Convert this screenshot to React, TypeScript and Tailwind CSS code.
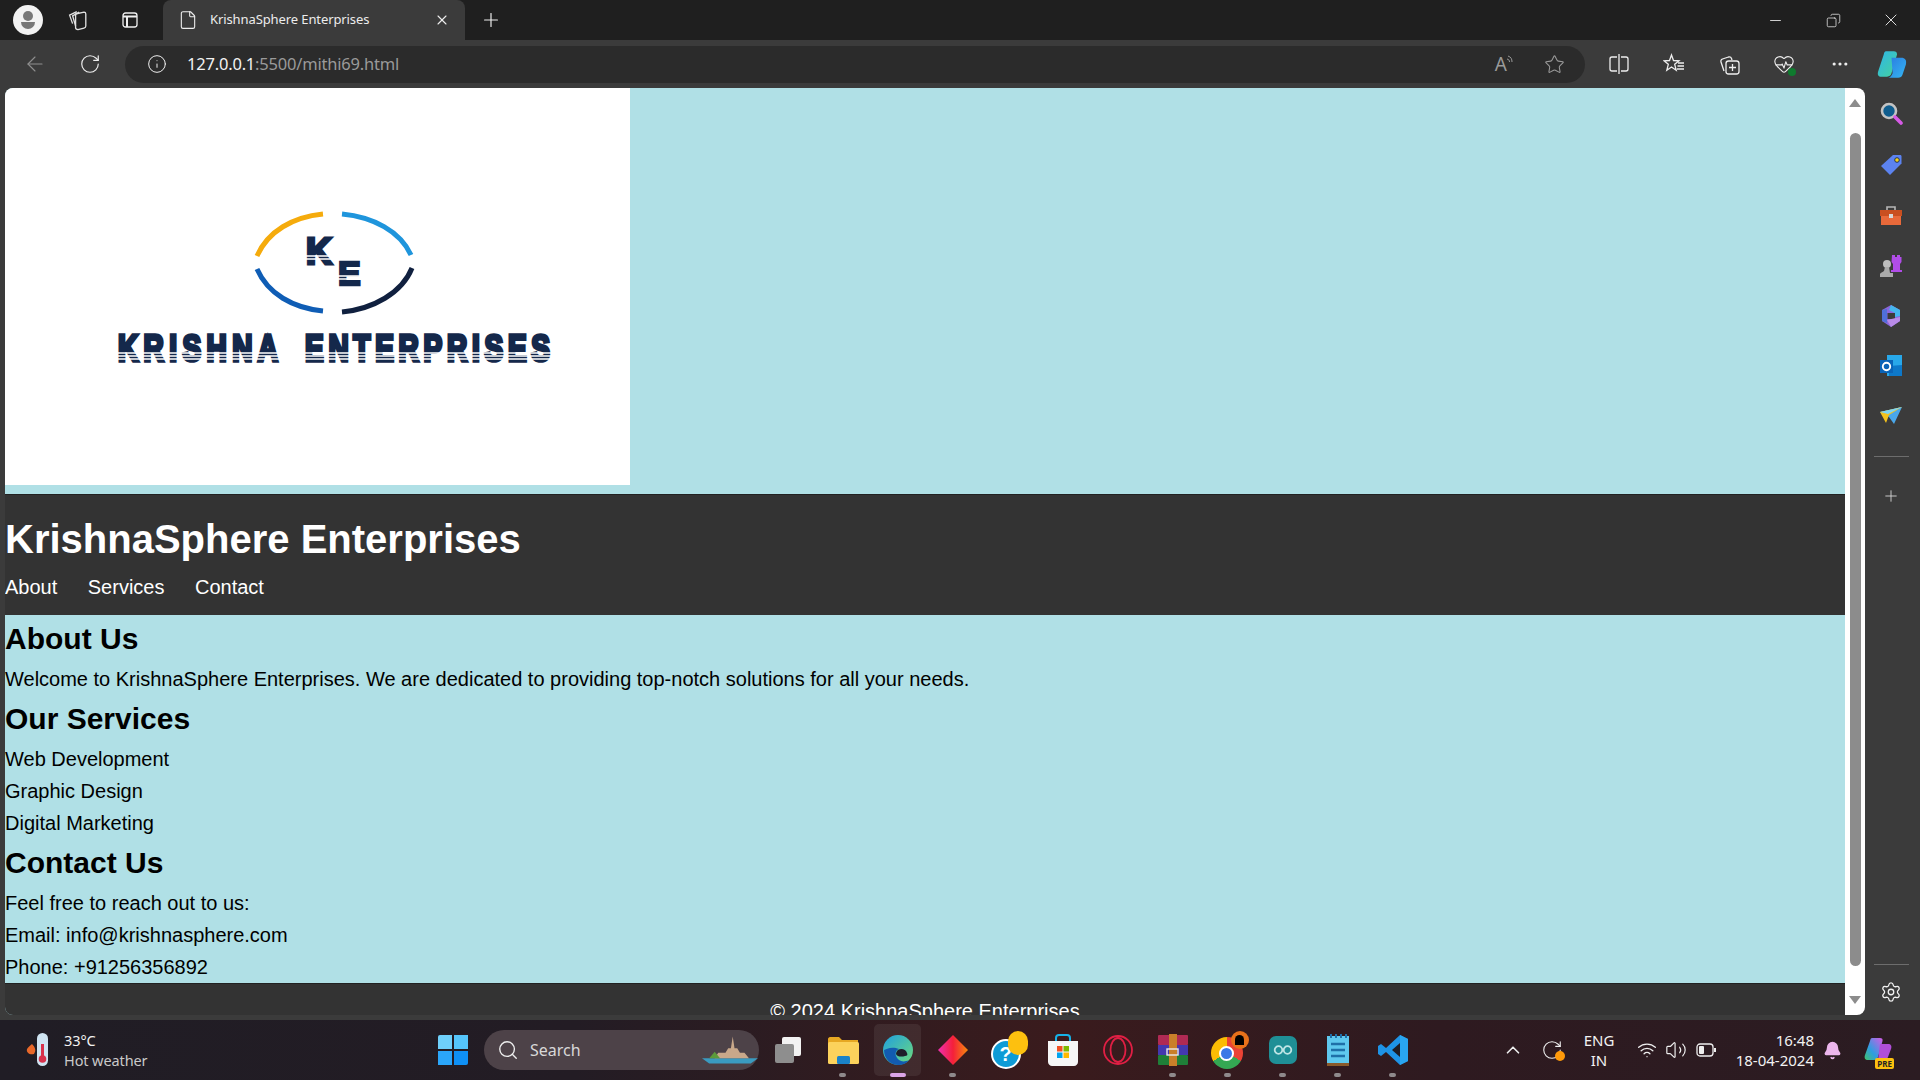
import { ArrowLeft, RotateCw, Info, Star, Plus, X, Minus, Ellipsis, Settings, Search, ChevronUp, Wifi, Volume2, File, Bell, Copy, HeartPulse } from 'lucide-react';
import type { ReactNode } from 'react';

const ui = "font-['Noto_Sans',sans-serif]";

function Copilot({ size = 28 }: { size?: number }) {
  return (
    <svg width={size} height={size} viewBox="0 0 28 28">
      <defs>
        <linearGradient id="cpA" x1="0" y1="0" x2="1" y2="1">
          <stop offset="0" stopColor="#2fb5ea" />
          <stop offset="1" stopColor="#45d39a" />
        </linearGradient>
        <linearGradient id="cpB" x1="0" y1="0" x2="1" y2="1">
          <stop offset="0" stopColor="#2a7be0" />
          <stop offset="1" stopColor="#35b6f2" />
        </linearGradient>
      </defs>
      <path d="M9 2h7c2 0 3 1 3 3l-5 17c-.5 2-2 3-4 3H5C2 25 1 23 2 20L7 5c.4-2 1-3 2-3z" fill="url(#cpA)" />
      <path d="M14 8h9c3 0 5 2 4 6l-3 9c-.6 2-2 3-4 3h-9c1 0 3-1 4-4z" fill="url(#cpB)" />
    </svg>
  );
}

function Logo() {
  return (
    <svg width="625" height="397" viewBox="0 0 625 397" className="block bg-white">
      <g fill="none" strokeWidth="5">
        <path d="M252 168C263 143 288 129 318 126" stroke="#f5ab0c" />
        <path d="M337 126C368 129 395 143 406 167" stroke="#1f95dc" />
        <path d="M252 181C263 206 288 220 318 223" stroke="#0f5db5" />
        <path d="M407 180C397 205 368 221 337 224" stroke="#10203f" />
      </g>
      <g fill="#14284b" stroke="#14284b" fontFamily="'Liberation Sans', sans-serif" fontWeight="700">
        <text x="301" y="176" fontSize="36" strokeWidth="3">K</text>
        <text x="333" y="197" fontSize="34" strokeWidth="2.400">E</text>
        <g strokeWidth="2.800">
          <text transform="translate(113 273) scale(1 1.3)" fontSize="28" textLength="160">KRISHNA</text>
          <text transform="translate(300 273) scale(1 1.3)" fontSize="28" textLength="245">ENTERPRISES</text>
        </g>
      </g>
      <g stroke="#ffffff" strokeWidth="1.300">
        <path d="M105 265H550M105 268H550M105 271H550" />
        <path d="M298 168H330M298 171H330M330 188H358M330 191H358" />
      </g>
    </svg>
  );
}

function SidebarIcon({ children, className }: { children: ReactNode; className: string }) {
  return <div className={`flex justify-center ${className}`}>{children}</div>;
}

function Sidebar() {
  return (
    <aside className="w-[55px] h-full flex flex-col items-center bg-[#3b3b3b] pr-[3px]">
      <SidebarIcon className="mt-[13px] h-[26px]">
        <svg width="24" height="24" viewBox="0 0 24 24">
          <circle cx="10" cy="10" r="7" fill="#0f5d8e" stroke="#c3c3c3" strokeWidth="2.6" />
          <path d="M16 16l6 6" stroke="#d65ae6" strokeWidth="3.6" strokeLinecap="round" />
        </svg>
      </SidebarIcon>
      <SidebarIcon className="mt-[26px] h-[26px]">
        <svg width="24" height="24" viewBox="0 0 24 24">
          <path d="M14 2h7c1 0 1.500.5 1.500 1.500v7L11 22 2 13z" fill="#5c83f0" />
          <circle cx="18" cy="7" r="2.300" fill="#f4d21c" stroke="#22314f" />
        </svg>
      </SidebarIcon>
      <SidebarIcon className="mt-[25px] h-[26px]">
        <svg width="24" height="24" viewBox="0 0 24 24">
          <path d="M8 6V3h8v3" fill="none" stroke="#b7b7b7" strokeWidth="1.600" />
          <rect x="1" y="6" width="22" height="6" fill="#c94f20" />
          <rect x="2" y="12" width="20" height="9" fill="#e8693a" />
          <rect x="10" y="10" width="4" height="4" fill="#d7d7d7" />
        </svg>
      </SidebarIcon>
      <SidebarIcon className="mt-[23px] h-[26px]">
        <svg width="26" height="26" viewBox="0 0 26 26">
          <circle cx="9" cy="11" r="4" fill="#bdbdbd" />
          <path d="M7 14h4l1 6h3v4H2v-3c0-1 3-2 4-3z" fill="#a9a9a9" />
          <path d="M14 2h3v2h2V2h3v2h1.500v5L22 11v6h2v2H13v-2h2v-6l-1.500-2z" fill="#b14de8" />
        </svg>
      </SidebarIcon>
      <SidebarIcon className="mt-[25px] h-[26px]">
        <svg width="24" height="24" viewBox="0 0 24 24">
          <path d="M12 1l9 5v11l-9 6-9-6V6z" fill="#8a67dc" />
          <path d="M12 1l9 5v6l-5 1V9l-6-3z" fill="#45b6ee" />
          <path d="M3 6l5-1v14l-5-2z" fill="#4f6fd8" />
          <path d="M8.500 9l7.500 0 0 6-7.500 0z" fill="#3b3b3b" />
          <path d="M8 16l13-3v4l-9 6z" fill="#b98be8" />
        </svg>
      </SidebarIcon>
      <SidebarIcon className="mt-[24px] h-[26px]">
        <svg width="24" height="24" viewBox="0 0 24 24">
          <rect x="8" y="1" width="15" height="21" fill="#28a8ea" />
          <path d="M10 12l13-1v11H10z" fill="#0d78c9" />
          <rect x="1" y="6" width="13" height="13" fill="#0a64b8" />
          <circle cx="7.500" cy="12.500" r="3.700" fill="none" stroke="#ffffff" strokeWidth="1.900" />
        </svg>
      </SidebarIcon>
      <SidebarIcon className="mt-[24px] h-[26px]">
        <svg width="24" height="24" viewBox="0 0 24 24">
          <path d="M1 8l22-5-8 17-5-7z" fill="#4aa7ea" />
          <path d="M1 8l22-5-13 8-3 8z" fill="#f4c21c" />
          <path d="M1 8l22-5L9 10z" fill="#7cd4f5" />
        </svg>
      </SidebarIcon>
      <div className="mt-[26px] w-[35px] h-px bg-[#6d6d6d]" />
      <Plus size={18} strokeWidth={1.2} className="mt-[30px] text-[#d8d8d8]" />
      <div className="mt-auto w-[35px] h-px bg-[#6d6d6d]" />
      <Settings size={22} strokeWidth={1.4} className="mt-[16px] mb-[17px] text-[#f2f2f2]" />
    </aside>
  );
}

function Scrollbar() {
  return (
    <div className="w-5 shrink-0 bg-white flex flex-col items-center">
      <div className="mt-[11px] w-0 h-0 border-x-[6px] border-x-transparent border-b-[8px] border-b-[#8c8c8c]" />
      <div className="mt-[26px] w-[11px] flex-1 rounded-full bg-[#8c8c8c]" />
      <div className="mt-[30px] mb-[11px] w-0 h-0 border-x-[6px] border-x-transparent border-t-[8px] border-t-[#8c8c8c]" />
    </div>
  );
}

function Page() {
  return (
    <div className="flex-1 min-w-0 flex ml-[5px] h-[927px] rounded-t-[8px] rounded-b-[8px] overflow-hidden font-['Liberation_Sans',sans-serif] text-[20px]">
      <div className="flex-1 min-w-0 flex flex-col bg-[#b0e0e6] text-black overflow-hidden">
        <div className="h-[406px] shrink-0">
          <Logo />
        </div>
        <header className="h-[121px] shrink-0 bg-[#333] text-white border-t border-[#222]">
          <h1 className="mt-[21px] text-[40px] leading-[46px] font-bold">KrishnaSphere Enterprises</h1>
          <nav className="mt-[14px] flex gap-[30.5px] leading-[23px]">
            <a>About</a>
            <a>Services</a>
            <a>Contact</a>
          </nav>
        </header>
        <main className="h-[368px] shrink-0">
          <h2 className="mt-[7px] text-[30px] leading-[34px] font-bold">About Us</h2>
          <p className="mt-[7px] leading-[32px]">Welcome to KrishnaSphere Enterprises. We are dedicated to providing top-notch solutions for all your needs.</p>
          <h2 className="mt-[7px] text-[30px] leading-[34px] font-bold">Our Services</h2>
          <ul className="mt-[7px] leading-[32px]">
            <li>Web Development</li>
            <li>Graphic Design</li>
            <li>Digital Marketing</li>
          </ul>
          <h2 className="mt-[7px] text-[30px] leading-[34px] font-bold">Contact Us</h2>
          <p className="mt-[7px] leading-[32px]">Feel free to reach out to us:</p>
          <p className="leading-[32px]">Email: info@krishnasphere.com</p>
          <p className="leading-[32px]">Phone: +91256356892</p>
        </main>
        <footer className="flex-1 bg-[#333] text-white text-center border-t border-[#222] overflow-hidden">
          <p className="mt-[16px] leading-[23px]">© 2024 KrishnaSphere Enterprises</p>
        </footer>
      </div>
      <Scrollbar />
    </div>
  );
}

function TabStrip() {
  return (
    <div className={`h-10 bg-[#1f1f1f] flex items-center text-white ${ui}`}>
      <div className="ml-[13px] w-[30px] h-[30px] -mr-[3px] rounded-full bg-[#f2f2f2] flex flex-col items-center justify-center">
        <div className="w-[10px] h-[10px] rounded-full bg-[#777]" />
        <div className="mt-[1px] w-[14px] h-[7px] rounded-b-full bg-[#777]" />
      </div>
      <svg width="24" height="24" viewBox="0 0 20 20" className="ml-[26px]" fill="none" stroke="#e0e0e0" strokeWidth="1.100">
        <path d="M8 5l7-1.500c1 0 1.500.5 1.500 1.500v10c0 1-.5 1.500-1.500 1.700L10 18c-1 0-2-.5-2-1.500z" />
        <path d="M8 15L5.500 6.500 11 3.500M5.500 13L3 6l6-3" />
      </svg>
      <svg width="18" height="18" viewBox="0 0 18 18" className="ml-[31px]" fill="none" stroke="#f0f0f0" strokeWidth="1.300">
        <rect x="2" y="2" width="14" height="14" rx="2.500" />
        <path d="M2 5.500h14M6 5.500V16" strokeWidth="2" />
      </svg>
      <div className="ml-[24px] w-[302px] h-10 bg-[#3b3b3b] rounded-t-[8px] flex items-center px-[15px]">
        <File size={20} strokeWidth={1.300} className="text-[#eee]" />
        <span className="ml-[12px] text-[13px] text-[#ececec] tracking-[-0.1px]">KrishnaSphere Enterprises</span>
        <X size={16} strokeWidth={1.600} className="ml-auto text-[#eee]" />
      </div>
      <Plus size={22} strokeWidth={1.300} className="ml-[15px] text-[#eee]" />
      <Minus size={17} strokeWidth={1.200} className="ml-auto text-[#eee]" />
      <Copy size={15} strokeWidth={1.200} className="ml-[42px] text-[#eee] -scale-x-100" />
      <X size={20} strokeWidth={1.100} className="ml-[40px] mr-[19px] text-[#eee]" />
    </div>
  );
}

function Toolbar() {
  return (
    <div className={`h-12 bg-[#3b3b3b] flex items-center ${ui}`}>
      <ArrowLeft size={24} strokeWidth={1.100} className="ml-[23px] text-[#8f8f8f]" />
      <RotateCw size={22} strokeWidth={1.300} className="ml-[32px] text-[#eee]" />
      <div className="ml-[24px] w-[1460px] h-[37px] rounded-full bg-[#2b2b2b] flex items-center pl-[22px] pr-[20px]">
        <Info size={20} strokeWidth={1.200} className="text-[#eee]" />
        <span className="ml-[20px] text-[16.5px] tracking-[-0.2px] text-[#f2f2f2]">
          127.0.0.1<span className="text-[#9a9a9a]">:5500/mithi69.html</span>
        </span>
        <div className="ml-auto mr-[1px] flex items-start text-[#9a9a9a]">
          <span className="text-[19px] leading-none">A</span>
          <svg width="8" height="12" viewBox="0 0 8 12" fill="none" stroke="#9a9a9a" strokeWidth="1">
            <path d="M1 1c3 1 4 3 4 6M0 4c2 .5 2.500 1.500 2.500 3" />
          </svg>
        </div>
        <Star size={21} strokeWidth={1.200} className="ml-[28px] text-[#9a9a9a]" />
      </div>
      <svg width="22" height="22" viewBox="0 0 22 22" className="ml-[23px]" fill="none" stroke="#eee" strokeWidth="1.300">
        <path d="M9 4H4c-1.500 0-2 .8-2 2v10c0 1.200.5 2 2 2h5M13 4h5c1.500 0 2 .8 2 2v10c0 1.200-.5 2-2 2h-5M11 1v20" />
      </svg>
      <svg width="22" height="22" viewBox="0 0 22 22" className="ml-[33px]" fill="none" stroke="#eee" strokeWidth="1.300">
        <path d="M8.500 2l2 5.500 5.500.3-4.300 3.500 1.500 6-4.700-3.300-4.700 3.300 1.500-6L1 7.800l5.500-.3z" />
        <path d="M15 10h6M14.500 13h6.500M14 16h7" />
      </svg>
      <svg width="22" height="22" viewBox="0 0 22 22" className="ml-[33px]" fill="none" stroke="#eee" strokeWidth="1.300">
        <path d="M6 18l-3-9c-.4-1.500 0-2.500 1.500-3l6-2c1.500-.4 2.500 0 3 1.500l.5 1.500" />
        <rect x="8" y="8" width="13" height="13" rx="2.500" />
        <path d="M14.500 11v7M11 14.500h7" />
      </svg>
      <div className="relative ml-[33px]">
        <HeartPulse size={22} strokeWidth={1.200} className="text-[#eee]" />
        <div className="absolute right-[-1px] bottom-[-1px] w-[8px] h-[8px] rounded-full bg-[#0f7b2e]" />
      </div>
      <Ellipsis size={20} strokeWidth={1.800} className="ml-[35px] text-[#eee]" />
      <div className="ml-[26px]">
        <Copilot size={31} />
      </div>
    </div>
  );
}

function TaskIcon({ children, dot, wide }: { children: ReactNode; dot?: boolean; wide?: boolean }) {
  return (
    <div className="relative w-[55px] h-[56px] flex items-center justify-center">
      {wide && <div className="absolute inset-y-[2px] inset-x-[4px] rounded-[5px] bg-[#ffffff12]" />}
      <div className="relative flex">{children}</div>
      {dot && <div className={`absolute bottom-[1px] h-[4px] rounded-full ${wide ? 'w-[16px] bg-[#dca5e8]' : 'w-[7px] bg-[#8f8a8c]'}`} />}
    </div>
  );
}

function TaskIcons() {
  return (
    <div className="ml-[1px] flex items-center">
      <TaskIcon>
        <div className="relative w-[26px] h-[26px]">
          <div className="absolute right-0 top-0 w-[19px] h-[19px] rounded-[2px] bg-[#f2f2f2]" />
          <div className="absolute left-0 bottom-0 w-[19px] h-[19px] rounded-[2px] bg-[#8e8e8e]" />
        </div>
      </TaskIcon>
      <TaskIcon dot>
        <svg width="32" height="28" viewBox="0 0 32 28">
          <path d="M1 3c0-1 1-2 2-2h9l3 3h16v4H1z" fill="#e7a823" />
          <rect x="1" y="6" width="31" height="22" rx="1.500" fill="#fcd25c" />
          <rect x="10" y="20" width="13" height="8" rx="1.500" fill="#1a83c9" />
        </svg>
      </TaskIcon>
      <TaskIcon dot wide>
        <svg width="30" height="30" viewBox="0 0 30 30">
          <defs>
            <linearGradient id="edgeTop" x1="0" y1="0" x2="1" y2="1">
              <stop offset="0" stopColor="#1f9fe0" />
              <stop offset="1" stopColor="#6fdc7a" />
            </linearGradient>
          </defs>
          <circle cx="15" cy="15" r="15" fill="url(#edgeTop)" />
          <path d="M1 15c0 9 7 15 14 15 5 0 9-2 11-5-6 3-11 1-13-4-1-3 0-6 3-7-7-3-13 0-15 1z" fill="#125bb0" />
          <path d="M15 15c3-2 8-1 9 3 1 2 0 3-2 3-3 1-8 1-9-2 0-2 1-3 2-4z" fill="#1f1f2a" />
        </svg>
      </TaskIcon>
      <TaskIcon dot>
        <svg width="30" height="30" viewBox="0 0 30 30">
          <defs>
            <linearGradient id="diamond" x1="0" y1="0" x2="1" y2="0">
              <stop offset="0" stopColor="#f02fb0" />
              <stop offset="0.500" stopColor="#f5203a" />
              <stop offset="1" stopColor="#f58a0c" />
            </linearGradient>
          </defs>
          <path d="M15 0l15 15-15 15L0 15z" fill="url(#diamond)" />
        </svg>
      </TaskIcon>
      <TaskIcon>
        <div className="relative w-[34px] h-[38px]">
          <div className="absolute left-0 bottom-0 w-[30px] h-[30px] rounded-full bg-[#0e9bd6] border-2 border-white flex items-center justify-center text-white font-bold text-[20px] leading-none font-['Liberation_Sans',sans-serif]">?</div>
          <div className="absolute right-[-3px] top-0 w-[20px] h-[24px] rounded-full bg-[#fdc00f]" />
        </div>
      </TaskIcon>
      <TaskIcon>
        <svg width="30" height="32" viewBox="0 0 30 32">
          <path d="M8 8V4c0-2 1-3 3-3h8c2 0 3 1 3 3v4" fill="none" stroke="#16b2e8" strokeWidth="2" />
          <path d="M0 7h30v21c0 2-2 4-4 4H4c-2 0-4-2-4-4z" fill="#f6f6f6" />
          <rect x="9" y="12" width="5.500" height="5.500" fill="#f25022" />
          <rect x="15.500" y="12" width="5.500" height="5.500" fill="#7fba00" />
          <rect x="9" y="18.500" width="5.500" height="5.500" fill="#00a4ef" />
          <rect x="15.500" y="18.500" width="5.500" height="5.500" fill="#ffb900" />
        </svg>
      </TaskIcon>
      <TaskIcon>
        <svg width="30" height="30" viewBox="0 0 30 30" fill="none" stroke="#e01f44" strokeWidth="1.800">
          <circle cx="15" cy="15" r="14" />
          <ellipse cx="15" cy="15" rx="7.500" ry="12" />
        </svg>
      </TaskIcon>
      <TaskIcon dot>
        <svg width="30" height="32" viewBox="0 0 30 32">
          <rect x="0" y="1" width="30" height="10" rx="1" fill="#b02a54" />
          <rect x="0" y="11" width="30" height="10" fill="#4338b0" />
          <rect x="0" y="21" width="30" height="10" rx="1" fill="#1f7f38" />
          <rect x="11" y="0" width="8" height="32" fill="#c97f2a" />
          <rect x="9" y="15" width="11" height="6" fill="none" stroke="#e8e8e8" strokeWidth="1.400" />
        </svg>
      </TaskIcon>
      <TaskIcon dot>
        <div className="relative w-[34px] h-[38px]">
          <div className="absolute left-0 bottom-0 w-[32px] h-[32px] rounded-full bg-[conic-gradient(#ea4335_0_120deg,#34a853_120deg_240deg,#fbbc04_240deg_360deg)] flex items-center justify-center">
            <div className="w-[15px] h-[15px] rounded-full bg-[#3b78e7] border-2 border-white" />
          </div>
          <div className="absolute right-[-4px] top-0 w-[18px] h-[18px] rounded-full bg-[#e8711a] flex items-center justify-center">
            <div className="w-[9px] h-[10px] rounded-t-full bg-black" />
          </div>
        </div>
      </TaskIcon>
      <TaskIcon dot>
        <div className="w-[28px] h-[28px] rounded-[7px] bg-[#1f8f96] flex items-center justify-center">
          <svg width="20" height="10" viewBox="0 0 20 10" fill="none" stroke="#bfe5e5" strokeWidth="1.800">
            <circle cx="5.500" cy="5" r="3.800" />
            <circle cx="14.500" cy="5" r="3.800" />
          </svg>
        </div>
      </TaskIcon>
      <TaskIcon dot>
        <svg width="24" height="32" viewBox="0 0 24 32">
          <rect x="1" y="2" width="22" height="28" fill="#5fc8ee" />
          <rect x="1" y="29" width="22" height="3" fill="#8a5a2c" />
          <path d="M5 0v4M10 0v4M15 0v4M20 0v4" stroke="#1f6fa8" strokeWidth="2" />
          <path d="M5 10h14M5 16h14M5 22h14" stroke="#1f6fa8" strokeWidth="2.400" />
        </svg>
      </TaskIcon>
      <TaskIcon dot>
        <svg width="30" height="30" viewBox="0 0 30 30">
          <path d="M22 0l8 4v22l-8 4L8 17l-5 4-3-2v-8l3-2 5 4z" fill="#1e93e6" />
          <path d="M22 8l-8 7 8 7z" fill="#1f1c24" />
          <path d="M22 0l8 4v22l-8 4z" fill="#29a5f0" />
        </svg>
      </TaskIcon>
    </div>
  );
}

function Taskbar() {
  return (
    <footer className={`h-[60px] flex items-center text-[#f2f2f2] bg-[linear-gradient(90deg,#201d25_0%,#231c24_30%,#3a1b1d_55%,#2e1a20_75%,#2b1c22_100%)] ${ui}`}>
      <svg width="26" height="36" viewBox="0 0 26 36" className="ml-[25px]">
        <path d="M7 12c4 4 4 7 2 10-4 1-8-1-7-5 1-2 3-3 5-5z" fill="#e8682a" />
        <rect x="12" y="1" width="11" height="33" rx="5.500" fill="#cfe4f2" />
        <rect x="16" y="12" width="3" height="14" fill="#d8324c" />
        <circle cx="17.500" cy="27" r="3.800" fill="#d8324c" />
      </svg>
      <div className="ml-[13px] w-[80px] -mt-[1px] text-[14.5px] leading-[20px] tracking-[-0.1px]">
        <div>33°C</div>
        <div className="text-[#c9c9c9] whitespace-nowrap">Hot weather</div>
      </div>
      <div className="ml-[294px] grid grid-cols-2 gap-[2px]">
        <div className="w-[14px] h-[14px] bg-[#6fd0fb] rounded-tl-[2px]" />
        <div className="w-[14px] h-[14px] bg-[#55c5fb]" />
        <div className="w-[14px] h-[14px] bg-[#2ba6fa]" />
        <div className="w-[14px] h-[14px] bg-[#0f90f5] rounded-br-[2px]" />
      </div>
      <div className="ml-[16px] w-[275px] h-10 rounded-full bg-[#4d4248] flex items-center pl-[13px]">
        <Search size={22} strokeWidth={1.500} className="text-[#eee]" />
        <span className="ml-[11px] text-[16px] text-[#d8d8d8]">Search</span>
        <svg width="56" height="30" viewBox="0 0 62 30" className="ml-auto mr-[1px]">
          <path d="M0 24h62l-8 6H8z" fill="#3a9bc0" />
          <path d="M14 24l4-6h8l3-5h3l2-13 2 13h3l3 5h5l5 6z" fill="#c9a88a" />
          <path d="M8 24l6-7 6 7z" fill="#5c9a3a" />
        </svg>
      </div>
      <TaskIcons />
      <ChevronUp size={22} strokeWidth={1.800} className="ml-[82px] text-[#eee]" />
      <div className="relative ml-[17px]">
        <RotateCw size={22} strokeWidth={1.200} className="text-[#eee]" />
        <div className="absolute right-[-2px] bottom-0 w-[10px] h-[10px] rounded-full bg-[#ff9a0a]" />
      </div>
      <div className="ml-[11px] w-[50px] text-center text-[15px] leading-[20px]">
        <div>ENG</div>
        <div>IN</div>
      </div>
      <Wifi size={20} strokeWidth={1.600} className="ml-[13px] text-[#eee]" />
      <Volume2 size={22} strokeWidth={1.300} className="ml-[8px] text-[#eee]" />
      <svg width="20" height="14" viewBox="0 0 20 14" className="ml-[9px]" fill="none">
        <rect x="1" y="1" width="16" height="12" rx="3" stroke="#eee" strokeWidth="1.300" />
        <rect x="3" y="3" width="5" height="8" rx="1" fill="#eee" />
        <rect x="18" y="5" width="2" height="4" fill="#eee" />
      </svg>
      <div className="ml-[18px] w-[80px] text-right text-[15px] leading-[20px] whitespace-nowrap">
        <div>16:48</div>
        <div>18-04-2024</div>
      </div>
      <Bell size={19} fill="#ecb6ec" stroke="#ecb6ec" className="ml-[9px]" />
      <div className="relative ml-[22px]">
        <svg width="28" height="26" viewBox="0 0 28 26">
          <defs>
            <linearGradient id="cpPre" x1="0" y1="1" x2="1" y2="0">
              <stop offset="0" stopColor="#3fc46a" />
              <stop offset="0.400" stopColor="#2f9de0" />
              <stop offset="1" stopColor="#d65ae6" />
            </linearGradient>
          </defs>
          <path d="M8 1h8c2 0 3 1 2.500 3L14 20c-.5 2-2 3-4 3H4c-3 0-4-2-3-5L6 4c.4-2 1-3 2-3z" fill="url(#cpPre)" />
          <path d="M16 7h8c3 0 4 2 3 5l-3 8c-.6 2-2 3-4 3h-6z" fill="#b04fd8" />
        </svg>
        <div className="absolute right-[-2px] bottom-[-6px] px-[2px] rounded-[2px] bg-[#fdc00f] text-[8px] leading-[11px] font-bold text-[#222]">PRE</div>
      </div>
    </footer>
  );
}

export default function App() {
  return (
    <div className="w-[1920px] h-[1080px] overflow-hidden flex flex-col bg-[#3b3b3b]">
      <TabStrip />
      <Toolbar />
      <div className="h-[932px] flex">
        <Page />
        <Sidebar />
      </div>
      <Taskbar />
    </div>
  );
}
